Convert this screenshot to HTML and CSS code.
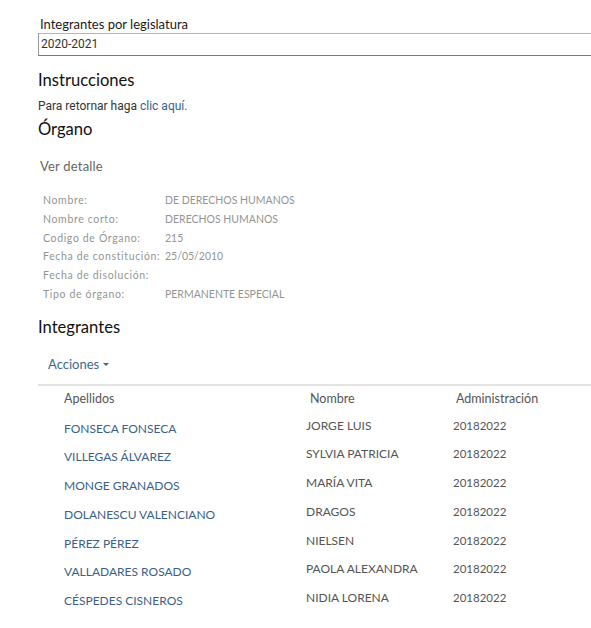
FILE: index.html
```html
<!DOCTYPE html>
<html lang="es">
<head>
<meta charset="utf-8">
<title>Integrantes</title>
<link rel="stylesheet" href="styles.css">
</head>
<body>
<div class="page">
  <div class="field">
    <label class="field-label">Integrantes por legislatura</label>
    <div class="select">2020-2021</div>
  </div>

  <h2 class="heading h-instr">Instrucciones</h2>
  <p class="instr">Para retornar haga <a href="#" class="link">clic aquí.</a></p>

  <h2 class="heading h-organo">Órgano</h2>
  <div class="detail-title">Ver detalle</div>
  <dl class="details">
    <div class="drow"><dt>Nombre:</dt><dd>DE DERECHOS HUMANOS</dd></div>
    <div class="drow"><dt>Nombre corto:</dt><dd>DERECHOS HUMANOS</dd></div>
    <div class="drow"><dt>Codigo de Órgano:</dt><dd>215</dd></div>
    <div class="drow"><dt>Fecha de constitución:</dt><dd>25/05/2010</dd></div>
    <div class="drow"><dt>Fecha de disolución:</dt><dd></dd></div>
    <div class="drow"><dt>Tipo de órgano:</dt><dd>PERMANENTE ESPECIAL</dd></div>
  </dl>

  <h2 class="heading h-integ">Integrantes</h2>
  <div class="actions">Acciones <span class="caret"></span></div>
  <div class="table">
    <div class="trow thead"><span class="c1">Apellidos</span><span class="c2">Nombre</span><span class="c3">Administración</span></div>
    <div class="trow"><a href="#" class="c1">FONSECA FONSECA</a><span class="c2">JORGE LUIS</span><span class="c3">20182022</span></div>
    <div class="trow"><a href="#" class="c1">VILLEGAS ÁLVAREZ</a><span class="c2">SYLVIA PATRICIA</span><span class="c3">20182022</span></div>
    <div class="trow"><a href="#" class="c1">MONGE GRANADOS</a><span class="c2">MARÍA VITA</span><span class="c3">20182022</span></div>
    <div class="trow"><a href="#" class="c1">DOLANESCU VALENCIANO</a><span class="c2">DRAGOS</span><span class="c3">20182022</span></div>
    <div class="trow"><a href="#" class="c1">PÉREZ PÉREZ</a><span class="c2">NIELSEN</span><span class="c3">20182022</span></div>
    <div class="trow"><a href="#" class="c1">VALLADARES ROSADO</a><span class="c2">PAOLA ALEXANDRA</span><span class="c3">20182022</span></div>
    <div class="trow"><a href="#" class="c1">CÉSPEDES CISNEROS</a><span class="c2">NIDIA LORENA</span><span class="c3">20182022</span></div>
  </div>
</div>
</body>
</html>
```

FILE: styles.css
```css
html, body {
  margin: 0;
  padding: 0;
  background: #fff;
}
body {
  font-family: "Lato", "DejaVu Sans", sans-serif;
  color: #222;
}
.page {
  padding: 16px 0 0 38px;
}
.field-label {
  display: block;
  font-size: 13px;
  line-height: 16px;
  color: #1a1a1a;
  margin-left: 2px;
}
.select {
  margin-top: 1px;
  height: 21px;
  border-top: 1px solid #b5b5b5;
  border-bottom: 1px solid #7a7a7a;
  border-left: 1px solid #999;
  font-family: "Roboto", "Liberation Sans", sans-serif;
  font-size: 12px;
  line-height: 21px;
  padding-left: 2px;
  color: #333;
}
.heading {
  margin: 0;
  font-weight: 400;
  font-size: 16.6px;
  line-height: 22px;
  color: #111;
}
.h-instr {
  margin-top: 13px;
}
.instr {
  margin: 8px 0 0;
  font-family: "Roboto", "Liberation Sans", sans-serif;
  font-size: 12px;
  line-height: 14px;
  color: #333;
}
.link {
  color: #35608f;
  text-decoration: none;
}
.h-organo {
  margin-top: 5px;
}
.detail-title {
  margin: 18px 0 0 2px;
  font-size: 13px;
  line-height: 16px;
  color: #666;
  letter-spacing: 0.2px;
}
.details {
  margin: 17px 0 0 5px;
  font-size: 10.5px;
  color: #949494;
}
.drow {
  display: flex;
  height: 18.8px;
  line-height: 18.8px;
}
.drow dt {
  width: 122px;
  flex: none;
  letter-spacing: 0.65px;
}
.drow dd {
  margin: 0;
}
.h-integ {
  margin-top: 12px;
}
.actions {
  margin: 18px 0 0 10px;
  font-size: 13px;
  line-height: 16px;
  color: #3d6791;
  display: flex;
  align-items: center;
  gap: 4px;
}
.caret {
  width: 0;
  height: 0;
  border-left: 3px solid transparent;
  border-right: 3px solid transparent;
  border-top: 3px solid #3d6791;
  margin-top: 2px;
}
.table {
  margin-top: 12px;
  border-top: 2px solid #e2e2e2;
}
.trow {
  display: grid;
  grid-template-columns: 242px 147px 1fr;
  padding-left: 26px;
  height: 28.7px;
  font-size: 12px;
  line-height: 16px;
}
.thead {
  height: 32px;
  padding-top: 5px;
  box-sizing: border-box;
  color: #555;
  font-size: 12.5px;
}
.trow a.c1 {
  color: #3a5f8a;
  text-decoration: none;
  padding-top: 3px;
}
.trow .c2, .trow .c3 {
  color: #555;
  padding-top: 0;
}
.trow .c3 {
  font-size: 11.5px;
}
.thead .c1, .thead .c2, .thead .c3 {
  padding-top: 0;
  color: #555;
  font-size: 12.5px;
}
.thead .c2 {
  padding-left: 4px;
}
.thead .c3 {
  padding-left: 3px;
}
```
